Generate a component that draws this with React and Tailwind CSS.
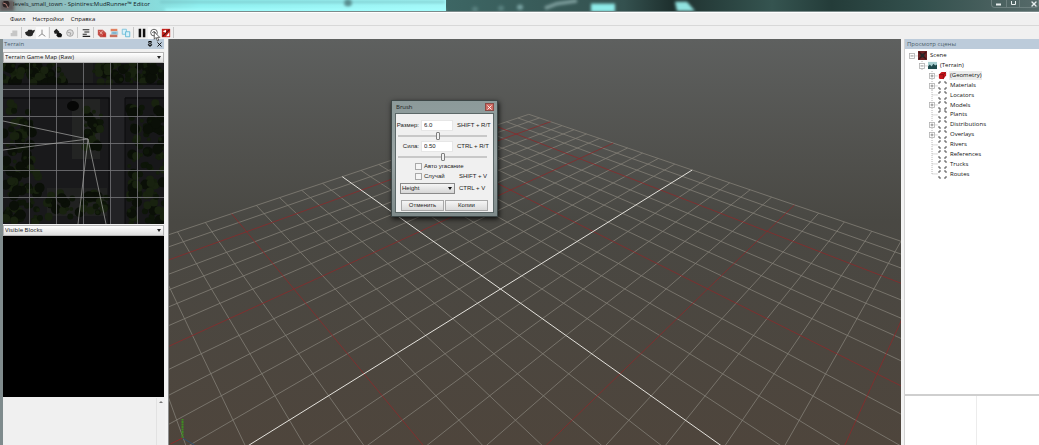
import React from 'react';
import { Pin, X } from 'lucide-react';

// Ground plane projection: grid units to viewport coordinates
const project = (a, b) => {
  const s = -a / 12;
  const t = -b / 13;
  const w = 1 + 0.463 * s + 0.4975 * t;
  return [(500 + 535.8 * t) / w, (289 - 30.5 * s - 34.4 * t) / w];
};

const line = (from, to) => {
  const [x1, y1] = project(...from);
  const [x2, y2] = project(...to);
  return { x1, y1, x2, y2 };
};

const range = (from, to) => Array.from({ length: to - from + 1 }, (_, i) => from + i);

const strokeOf = (n) => {
  if (n === 0) return '#e4e2dc';
  return n % 5 === 0 ? '#8c2a2b' : '#837f76';
};

// Major lines are painted over the plain ones
const rankOf = (n) => (n === 0 ? 2 : n % 5 === 0 ? 1 : 0);

const gridLines = [
  ...range(-12, 12).map((a) => ({ n: a, ...line([a, -13], [a, 12]) })),
  ...range(-13, 12).map((b) => ({ n: b, ...line([-12, b], [12, b]) })),
].sort((p, q) => rankOf(p.n) - rankOf(q.n));

// Foliage blobs on the terrain map, with a small fixed pseudo random spread
const foliageAreas = [
  [0, 0, 60, 20, 60],
  [90, 0, 70, 20, 54],
  [0, 40, 30, 66, 50],
  [126, 38, 36, 122, 110],
  [0, 108, 38, 52, 60],
  [44, 130, 60, 24, 44],
  [82, 42, 16, 46, 26],
];

const foliage = foliageAreas.flatMap(([x, y, w, h, count], area) =>
  range(1, count).map((i) => {
    const rx = (Math.sin(i * 12.9898 + area * 4.1) * 43758.5453) % 1;
    const ry = (Math.sin(i * 78.233 + area * 9.7) * 12543.123) % 1;
    return {
      cx: x + Math.abs(rx) * w,
      cy: y + Math.abs(ry) * h,
      r: 2 + (i % 4),
      fill: ['#141e0c', '#0d1508', '#18220f', '#0a0f07'][i % 4],
    };
  })
);

const treeItems = [
  { label: 'Scene', depth: 0, sign: '-', icon: 'scene' },
  { label: '(Terrain)', depth: 1, sign: '-', icon: 'terrain' },
  { label: '(Geometry)', depth: 2, sign: '+', icon: 'geometry', selected: true },
  { label: 'Materials', depth: 2, sign: '+' },
  { label: 'Locators', depth: 2 },
  { label: 'Models', depth: 2, sign: '+' },
  { label: 'Plants', depth: 2 },
  { label: 'Distributions', depth: 2, sign: '+' },
  { label: 'Overlays', depth: 2, sign: '+' },
  { label: 'Rivers', depth: 2 },
  { label: 'References', depth: 2 },
  { label: 'Trucks', depth: 2 },
  { label: 'Routes', depth: 2, last: true },
];

const indents = ['pl-0', 'pl-[10px]', 'pl-[20px]'];

const ItemIcon = ({ type }) => {
  if (type === 'scene') {
    return (
      <svg viewBox="0 0 10 10" className="size-[9px] shrink-0">
        <rect width="10" height="10" fill="#6e2426" />
        <path d="M1 1l3 3M9 1L6 4M1 9l3-3M9 9L6 6" stroke="#3a1518" strokeWidth="1.5" />
        <path d="M3 3h4v4H3z" fill="#25282a" />
      </svg>
    );
  }
  if (type === 'terrain') {
    return (
      <svg viewBox="0 0 10 10" className="size-[9px] shrink-0">
        <rect y="1" width="10" height="8" fill="#a9cfd0" />
        <path d="M0 9V6l2-2 2 2 2-3 2 2 2-1v5z" fill="#1f4a4c" />
      </svg>
    );
  }
  if (type === 'geometry') {
    return (
      <svg viewBox="0 0 10 10" className="size-[9px] shrink-0">
        <path d="M1 4l3-3h4l1 1v3L6 9H2L1 8z" fill="#c4161c" />
        <path d="M1 4h5v5M6 4l3-3" stroke="#7d0c10" fill="none" strokeWidth="0.8" />
      </svg>
    );
  }
  return (
    <svg viewBox="0 0 9 9" className="size-[9px] shrink-0">
      <path d="M1 3V1h2M6 1h2v2M1 6v2h2M6 8h2V6" stroke="#444" fill="none" strokeWidth="0.9" />
    </svg>
  );
};

const TreeItem = ({ item }) => (
  <li className={`flex items-center ${indents[item.depth]}`}>
    <svg viewBox="0 0 10 10" className="h-full w-[9px] shrink-0" preserveAspectRatio="xMidYMid slice">
      {item.depth > 0 && (
        <path d={item.last ? 'M3.5 0V5' : 'M3.5 0V10'} stroke="#b4b4b4" strokeDasharray="1 1" />
      )}
      <path d="M4 5h6" stroke="#b4b4b4" strokeDasharray="1 1" />
      {item.sign && (
        <>
          <rect x="1" y="2.5" width="5" height="5" fill="#fff" stroke="#b0b0b0" strokeWidth="0.8" />
          <path d={item.sign === '+' ? 'M2 5h3M3.5 3.5v3' : 'M2 5h3'} stroke="#777" strokeWidth="0.8" />
        </>
      )}
    </svg>
    <ItemIcon type={item.icon} />
    <span className={`ml-[2px] px-px leading-[9px] ${item.selected ? 'bg-[#ececec]' : ''}`}>
      {item.label}
    </span>
  </li>
);

const tools = [
  {
    name: 'Save',
    art: <path d="M2 10V6h2V3h6v7z" fill="#c6c6c6" />,
    end: true,
  },
  {
    name: 'Solid view',
    art: <path d="M0 5l3-1 1-2h4l1 1 3-1-1 3-1 1-1 3-2 1H4L1 8z" fill="#262626" />,
  },
  {
    name: 'Axes',
    pressed: true,
    art: <path d="M6 2v5L2 10M6 7l4 3" stroke="#777" fill="none" />,
    end: true,
  },
  {
    name: 'Terrain',
    art: (
      <>
        <path d="M1 4l3-3 3 3 1 1-2 2H2z" fill="#222" />
        <path d="M5 6h4l2 2-1 3H6L4 9z" fill="#111" />
      </>
    ),
  },
  {
    name: 'Rotate',
    art: (
      <>
        <circle cx="6" cy="6" r="4" fill="#dedede" stroke="#9a9a9a" />
        <path d="M3 5l4 1-1 3" stroke="#999" fill="none" />
      </>
    ),
    end: true,
  },
  {
    name: 'Properties',
    art: <path d="M2 2h8M4 4.7h6M2 7.4h5M2 10h9" stroke="#222" strokeWidth="1.3" />,
    end: true,
  },
  {
    name: 'Rebuild',
    art: (
      <>
        <path d="M1 2h6l4 4v5H4L1 8z" fill="#c2504a" />
        <path d="M3 4l5 5M7 3L4 7" stroke="#f0c1b4" />
        <circle cx="8.5" cy="8.5" r="2" fill="#c9332d" />
      </>
    ),
  },
  {
    name: 'Open level',
    art: (
      <>
        <path d="M2 1h8v3H2z" fill="#e0805f" />
        <path d="M3 4h8v4H2z" fill="#a8cfe0" />
        <path d="M1 8h9v3H1z" fill="#c9705c" />
        <path d="M4 6h5" stroke="#4a90b4" />
      </>
    ),
  },
  {
    name: 'Copy',
    art: (
      <>
        <path d="M1.5 1.5h5v6h-5z" fill="#d9f1fa" stroke="#72bfd8" />
        <path d="M5.5 4.5h5v6h-5z" fill="#d9f1fa" stroke="#57b4d2" />
      </>
    ),
    end: true,
  },
  {
    name: 'Pause',
    art: <path d="M2 1h3v10H2zM7 1h3v10H7z" fill="#111" />,
  },
  {
    name: 'Simulate',
    pressed: true,
    art: (
      <>
        <circle cx="6" cy="5.5" r="4" fill="#fff" stroke="#444" />
        <path d="M4 6l2-2 2 2" stroke="#222" fill="none" />
      </>
    ),
  },
  {
    name: 'Disable',
    art: (
      <>
        <path d="M1 1h10v10H1z" fill="#c3211c" />
        <path d="M2 4l4-2v4zM6 10l4-5v5z" fill="#fff" />
        <path d="M2 10l8-8" stroke="#501010" strokeWidth="1.4" />
      </>
    ),
    end: true,
  },
];

const ToolBar = () => (
  <div className="relative z-10 flex h-[14px] items-center border-t border-[#d8d8d8] bg-[#f0f0f0] pl-[8px]">
    {tools.map((tool) => (
      <React.Fragment key={tool.name}>
        <button
          aria-label={tool.name}
          className={`flex h-[12px] w-[12px] items-center justify-center ${tool.pressed ? 'bg-[#fafafa]' : ''}`}
        >
          <svg viewBox="0 0 12 12" className="size-[10px]">
            {tool.art}
          </svg>
        </button>
        {tool.end && <span className="mr-[2px] ml-px h-[11px] w-px bg-[#c8c8c8]" />}
      </React.Fragment>
    ))}
    {/* Mouse pointer */}
    <svg viewBox="0 0 8 12" className="absolute top-[5px] left-[153px] h-[11px] w-[8px]">
      <path d="M1 1v8l2-2 1.5 4 1.5-1-1.5-3H7z" fill="#fff" stroke="#333" strokeWidth="0.8" />
    </svg>
  </div>
);

const TitleBar = () => (
  <header className="relative flex h-[12px] shrink-0 items-start overflow-hidden border-b border-[#7b8b8b] bg-[#253c3a]">
    <svg className="absolute inset-0 h-full w-full" viewBox="0 0 1039 12" preserveAspectRatio="none">
      <defs>
        <linearGradient id="glass">
          <stop offset="0" stopColor="#7b8584" />
          <stop offset="0.06" stopColor="#8fb0b0" />
          <stop offset="0.2" stopColor="#8cc9c9" />
          <stop offset="0.36" stopColor="#88dddd" />
          <stop offset="0.45" stopColor="#90f0f0" />
          <stop offset="1" stopColor="#a4f8f8" />
        </linearGradient>
        <linearGradient id="dark">
          <stop offset="0" stopColor="#3d6664" />
          <stop offset="0.3" stopColor="#34514f" />
          <stop offset="0.38" stopColor="#1e302e" />
          <stop offset="0.55" stopColor="#355450" />
          <stop offset="0.65" stopColor="#243c39" />
          <stop offset="0.8" stopColor="#33504d" />
          <stop offset="1" stopColor="#566a69" />
        </linearGradient>
        <filter id="soft">
          <feGaussianBlur stdDeviation="1.5" />
        </filter>
      </defs>
      <rect width="446" height="12" fill="url(#glass)" />
      <rect x="446" width="593" height="12" fill="url(#dark)" />
      <g filter="url(#soft)">
        <path d="M0 0h14v12H0z" fill="#625b5b" />
        <path d="M160 2h285" stroke="#75bfc2" strokeWidth="2" />
        <path d="M165 11h280" stroke="#a6ffff" strokeWidth="3" />
        <circle cx="348" cy="3" r="4" fill="#588d8f" />
        <path d="M545 9l12-5 20-3" stroke="#7b9c9b" strokeWidth="4" fill="none" />
        <circle cx="520" cy="8" r="3" fill="#78a3a2" />
        <circle cx="501" cy="9" r="3" fill="#58817f" />
        <circle cx="475" cy="10" r="3" fill="#58817f" />
        <path d="M591 4h24v9h-24z" fill="#8eecea" />
        <path d="M675 2h12l8 10h-18z" fill="#91e3e0" />
      </g>
    </svg>
    <svg viewBox="0 0 8 8" className="relative mt-px ml-[2px] size-[8px]">
      <circle cx="4" cy="3" r="3.5" fill="#2d2424" />
      <path d="M1 2l3 1 2 4" stroke="#a87a72" fill="none" />
    </svg>
    <h1 className="relative ml-[3px] leading-[9px] text-[#12201f]">
      levels_small_town - Spintires:MudRunner™ Editor
    </h1>
    <div className="relative ml-auto flex h-[8px] rounded-b-sm border border-t-0 border-[#6c7f7e] text-[#e8eeee]">
      <button aria-label="Minimize" className="flex w-[15px] items-center justify-center border-r border-[#6c7f7e]">
        <svg viewBox="0 0 8 6" className="h-[6px] w-[8px]"><path d="M1 3.5h5" stroke="currentColor" strokeWidth="2" /></svg>
      </button>
      <button aria-label="Maximize" className="flex w-[13px] items-center justify-center border-r border-[#6c7f7e]">
        <svg viewBox="0 0 8 6" className="h-[6px] w-[8px]"><path d="M2.5 0v3.5h4V0" stroke="currentColor" fill="none" /></svg>
      </button>
      <button aria-label="Close" className="flex w-[18px] items-center justify-end">
        <X className="size-[8px]" strokeWidth={4} />
      </button>
    </div>
  </header>
);

const PanelSelect = ({ label, value }) => (
  <div className="relative h-[11px] border border-[#b5b5b5] bg-linear-to-b from-white to-[#dedede]">
    <select aria-label={label} className="block h-full w-full appearance-none pl-px leading-[9px]">
      <option>{value}</option>
    </select>
    <span className="pointer-events-none absolute top-[3px] right-[2px] border-x-[2px] border-t-[3px] border-x-transparent border-t-[#222]" />
  </div>
);

const TerrainMap = () => (
  <svg viewBox="0 0 161 161" className="block w-full bg-[#171719]">
    <path d="M0 36h106v124H0z" fill="#19191b" />
    <path d="M69 36h28v60H69z" fill="#232423" />
    <path d="M54 0h36v20H54z" fill="#1d1e1d" />
    <path d="M44 125h60v28H44z" fill="#202120" />
    {foliage.map((leaf, i) => (
      <circle key={i} {...leaf} />
    ))}
    <ellipse cx="70" cy="43" rx="6" ry="5" fill="#060706" />
    <path d="M0 22h161v12H0zM108 34h14v127h-14z" fill="#222225" />
    <path d="M0 21h161M0 35h106v126M122 161V35h39" stroke="#0b0b0c" fill="none" />
    <path
      d="M26.5 0v161M53.5 0v161M80.5 0v161M107.5 0v161M134.5 0v161M0 26.5h161M0 53.5h161M0 80.5h161M0 107.5h161M0 134.5h161"
      stroke="#77777a"
      strokeOpacity="0.8"
    />
    <path d="M0 58l85 18L0 87M75 161l10-85 18 85" stroke="#a9a9a7" fill="none" strokeWidth="0.7" />
  </svg>
);

const BrushSlider = ({ label, value }) => (
  <input
    type="range"
    aria-label={label}
    defaultValue={value}
    className="mx-[2px] h-[8px] w-[89px] appearance-none bg-transparent [&::-webkit-slider-runnable-track]:h-[2px] [&::-webkit-slider-runnable-track]:border [&::-webkit-slider-runnable-track]:border-[#c8c8c8] [&::-webkit-slider-runnable-track]:bg-white [&::-webkit-slider-thumb]:-mt-[4px] [&::-webkit-slider-thumb]:h-[8px] [&::-webkit-slider-thumb]:w-[4px] [&::-webkit-slider-thumb]:appearance-none [&::-webkit-slider-thumb]:rounded-[1px] [&::-webkit-slider-thumb]:border [&::-webkit-slider-thumb]:border-[#808080] [&::-webkit-slider-thumb]:bg-[#f2f2f2]"
  />
);

const BrushField = ({ id, label, value, shortcut }) => (
  <div className="flex h-[12px] items-center">
    <label htmlFor={id} className="w-[25px] pr-[2px] text-right">{label}</label>
    <input id={id} defaultValue={value} className="h-[11px] w-[32px] border border-[#e6e6e6] bg-white pl-[2px]" />
    <span className="ml-[4px] whitespace-nowrap">{shortcut}</span>
  </div>
);

const BrushCheck = ({ label, shortcut }) => (
  <div className="flex h-[10px] items-center pl-[19px]">
    <label className="flex w-[44px] items-center gap-[2px] whitespace-nowrap">
      <input type="checkbox" className="size-[7px] shrink-0 appearance-none border border-[#a8a8a8] bg-[#f5f5f5]" />
      {label}
    </label>
    {shortcut && <span className="whitespace-nowrap">{shortcut}</span>}
  </div>
);

const BrushDialog = () => (
  <section
    aria-label="Brush"
    className="absolute top-[61px] left-[222px] flex w-[107px] flex-col border border-[#3d4747] bg-linear-to-b from-[#8c9a9a] via-[#9aa4a4] to-[#7e8a8a] p-[3px] pt-0 font-['Liberation_Sans',sans-serif] shadow-[1px_2px_5px_rgba(0,0,0,0.8)]"
  >
    <div className="flex h-[12px] items-center justify-between pl-px">
      <h2 className="font-['Open_Sans',sans-serif] text-[#1c2222]">Brush</h2>
      <button aria-label="Close brush" className="flex h-[8px] w-[9px] items-center justify-center border border-[#8b4a46] bg-[#cf6a62] text-white">
        <X className="size-[7px]" strokeWidth={3} />
      </button>
    </div>
    <div className="border border-[#5c6868] bg-[#f0f0f0] pt-[5px] pb-px text-[#222]">
      <BrushField id="brush-size" label="Размер:" value="6.0" shortcut="SHIFT + R/T" />
      <div className="flex h-[9px] items-center"><BrushSlider label="Размер" value="44" /></div>
      <BrushField id="brush-force" label="Сила:" value="0.50" shortcut="CTRL + R/T" />
      <div className="flex h-[9px] items-center"><BrushSlider label="Сила" value="50" /></div>
      <BrushCheck label="Авто угасание" />
      <BrushCheck label="Случай" shortcut="SHIFT + V" />
      <div className="mt-[2px] flex h-[11px] items-center pl-[4px]">
        <div className="relative h-[11px] w-[55px] border border-[#8a8a8a] bg-linear-to-b from-[#f5f5f5] to-[#d6d6d6]">
          <select aria-label="Brush mode" className="block h-full w-full appearance-none pl-px leading-[9px]">
            <option>Height</option>
          </select>
          <span className="pointer-events-none absolute top-[3px] right-[2px] border-x-[2px] border-t-[3px] border-x-transparent border-t-[#111]" />
        </div>
        <span className="ml-[4px] whitespace-nowrap">CTRL + V</span>
      </div>
      <div className="mt-[6px] flex gap-px px-[5px]">
        <button className="h-[11px] flex-1 border border-[#a8a8a8] bg-linear-to-b from-[#f5f5f5] to-[#dadada]">Отменить</button>
        <button className="h-[11px] flex-1 border border-[#a8a8a8] bg-linear-to-b from-[#f5f5f5] to-[#dadada]">Копии</button>
      </div>
    </div>
  </section>
);

const Viewport = () => (
  <main className="relative min-w-0 flex-1 overflow-hidden bg-linear-to-b from-[#5e605f] via-[#494843] via-45% to-[#4e453c]">
    <svg viewBox="168 39 733 406" className="absolute inset-0 h-full w-full" preserveAspectRatio="xMidYMid slice">
      {gridLines.map(({ n, ...points }, i) => (
        <line key={i} {...points} stroke={strokeOf(n)} strokeWidth={n === 0 ? 1 : 0.8} />
      ))}
      <path d="M182 438v-19" stroke="#3f8a22" strokeWidth="2" strokeDasharray="2 0.5" />
      <path d="M182 438l12 7" stroke="#31506e" />
      <path d="M182 438l-12 6" stroke="#8a2b2b" />
    </svg>
    <BrushDialog />
  </main>
);

const TerrainPanel = () => (
  <aside className="flex w-[165px] shrink-0 flex-col border-l-[3px] border-[#7f8b8d] bg-[#f0f0f0] pr-px">
    <div className="flex h-[10px] items-center bg-[#bccbda] px-px text-[#4b5d68]">
      <h2>Terrain</h2>
      <button aria-label="Pin panel" className="ml-auto text-black"><Pin className="size-[6px]" strokeWidth={4} /></button>
      <button aria-label="Close panel" className="ml-[3px] text-black"><X className="size-[7px]" strokeWidth={3} /></button>
    </div>
    <div className="mt-[3px]"><PanelSelect label="Map layer" value="Terrain Game Map (Raw)" /></div>
    <TerrainMap />
    <div className="mt-px"><PanelSelect label="Block layer" value="Visible Blocks" /></div>
    <div className="aspect-square w-full bg-black" />
    <div className="mt-px flex flex-1 justify-end">
      <div className="flex w-[8px] justify-center border-l border-[#e2e2e2] pt-[3px]">
        <span className="h-0 border-x-[2px] border-b-[2px] border-x-transparent border-b-[#777]" />
      </div>
    </div>
  </aside>
);

const ScenePanel = () => (
  <aside className="flex w-[134px] shrink-0 flex-col bg-white">
    <h2 className="h-[10px] bg-[#bccbda] pl-[2px] leading-[10px] text-[#4b5d68]">Просмотр сцены</h2>
    <ul className="mt-[2px] grid h-[128px] auto-rows-fr pl-[4px]">
      {treeItems.map((item) => (
        <TreeItem key={item.label} item={item} />
      ))}
    </ul>
    <div className="mt-auto flex h-[51px] border-t-2 border-[#cfcfcf]">
      <div className="w-[72px] border-r border-[#ececec]" />
    </div>
  </aside>
);

const App = () => {
  return (
    <div className="flex h-screen flex-col overflow-hidden bg-[#f0f0f0] font-['Open_Sans',sans-serif] text-[6px] leading-[9px] font-medium text-[#111]">
      <TitleBar />
      <nav className="flex h-[13px] shrink-0 items-center gap-[7px] border-t border-white pl-[10px]">
        <button>Фаил</button>
        <button>Настройки</button>
        <button>Справка</button>
      </nav>
      <ToolBar />
      <div className="flex min-h-0 flex-1">
        <TerrainPanel />
        <div className="w-[4px] shrink-0 border-r border-[#8d8d8d] bg-[#f3f3f3]" />
        <Viewport />
        <div className="w-[4px] shrink-0 border-r border-[#d2d2d2] bg-[#f3f3f3]" />
        <ScenePanel />
      </div>
    </div>
  );
};

export default App;
